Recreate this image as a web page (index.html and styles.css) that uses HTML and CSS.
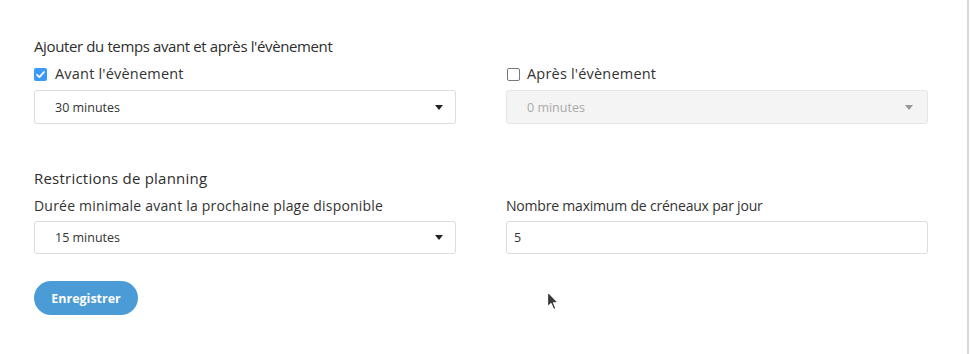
FILE: index.html
```html
<!DOCTYPE html>
<html lang="fr">
<head>
<meta charset="utf-8">
<title>Paramètres</title>
<link rel="stylesheet" href="styles.css">
</head>
<body>
<div class="frame">
  <main class="page">
    <section class="section">
      <h2 class="section-title title-1">Ajouter du temps avant et après l'évènement</h2>
      <div class="cols">
        <div class="col">
          <label class="check">
            <span class="box box-on">
              <svg viewBox="0 0 13 13" width="13" height="13"><path d="M3 6.8 L5.4 9.1 L10 4" fill="none" stroke="#fff" stroke-width="1.8" stroke-linecap="round" stroke-linejoin="round"/></svg>
            </span>
            <span class="check-text">Avant l'évènement</span>
          </label>
          <div class="select">
            <span class="select-value">30 minutes</span>
            <span class="caret"></span>
          </div>
        </div>
        <div class="col">
          <label class="check">
            <span class="box box-off"></span>
            <span class="check-text">Après l'évènement</span>
          </label>
          <div class="select select-disabled">
            <span class="select-value">0 minutes</span>
            <span class="caret"></span>
          </div>
        </div>
      </div>
    </section>

    <section class="section section-2">
      <h2 class="section-title title-2">Restrictions de planning</h2>
      <div class="cols">
        <div class="col">
          <div class="field-label label-wide">Durée minimale avant la prochaine plage disponible</div>
          <div class="select select-2">
            <span class="select-value">15 minutes</span>
            <span class="caret"></span>
          </div>
        </div>
        <div class="col">
          <div class="field-label">Nombre maximum de créneaux par jour</div>
          <div class="input">5</div>
        </div>
      </div>
    </section>

    <div class="actions">
      <button class="btn" type="button">Enregistrer</button>
      <svg class="pointer" width="14" height="22" viewBox="0 0 14 22">
        <path d="M1.5 1.5 L1.5 17 L5 13.6 L7.6 19.6 L10 18.6 L7.5 12.8 L12.3 12.8 Z" fill="#3a3a3a" stroke="#fff" stroke-width="1.2" stroke-linejoin="round"/>
      </svg>
    </div>
  </main>
  <div class="edge"></div>
</div>
</body>
</html>
```
FILE: styles.css
```css
html, body {
  margin: 0;
  padding: 0;
  background: #fff;
}
body {
  font-family: "Open Sans", "Noto Sans", "DejaVu Sans", sans-serif;
  color: #333;
}
.frame {
  display: flex;
  width: 970px;
  height: 354px;
  overflow: hidden;
}
.page {
  width: 894px;
  padding: 36px 0 0 34px;
  flex: none;
}
.edge {
  margin-left: auto;
  width: 2px;
  margin-right: 1px;
  background: #d8d8d8;
}
.section-title {
  margin: 0;
  font-size: 15px;
  font-weight: 400;
  line-height: 20px;
  color: #2e2e2e;
}
.title-1 {
  letter-spacing: -0.38px;
}
.title-2 {
  letter-spacing: 0.22px;
}
.section-2 {
  margin-top: 44px;
}
.cols {
  display: grid;
  grid-template-columns: 422px 422px;
  column-gap: 50px;
}
.col {
  display: flex;
  flex-direction: column;
}
.section .cols {
  margin-top: 8px;
}
.check {
  display: flex;
  align-items: center;
  height: 20px;
  gap: 8px;
  font-size: 14.5px;
}
.col:nth-child(2) .check {
  padding-left: 1px;
  gap: 7px;
}
.box {
  width: 13px;
  height: 13px;
  box-sizing: border-box;
  border-radius: 2px;
  display: flex;
  flex: none;
}
.box-on {
  background: #3b99fc;
}
.box-off {
  border: 1.5px solid #777;
}
.check-text {
  line-height: 20px;
  letter-spacing: 0.2px;
}
.select, .input {
  box-sizing: border-box;
  height: 34px;
  border: 1px solid #dcdcdc;
  border-radius: 3px;
  background: #fff;
  display: flex;
  align-items: center;
  font-size: 12.5px;
  color: #333;
}
.select {
  margin-top: 6px;
  padding: 0 10px 0 20px;
  justify-content: space-between;
}
.select-2 {
  margin-top: 5px;
  height: 33px;
}
.select-disabled {
  background: #f4f4f4;
  border-color: #e6e6e6;
  color: #aaa;
}
.caret {
  width: 0;
  height: 0;
  border-left: 4px solid transparent;
  border-right: 4px solid transparent;
  border-top: 5px solid #222;
  margin-right: 2px;
}
.select-disabled .caret {
  border-top-color: #999;
  margin-right: 4px;
}
.field-label {
  font-size: 14px;
  line-height: 20px;
  letter-spacing: -0.2px;
}
.label-wide {
  letter-spacing: 0.2px;
}
.input {
  margin-top: 5px;
  height: 33px;
  padding: 0 7px;
}
.actions {
  margin-top: 27px;
  display: flex;
  position: relative;
}
.btn {
  height: 34px;
  width: 104px;
  border: none;
  border-radius: 17px;
  background: #4a9bd6;
  color: #fff;
  font-family: "Open Sans", "Noto Sans", sans-serif;
  font-size: 12.5px;
  font-weight: 700;
  padding: 0;
  cursor: pointer;
}
.pointer {
  position: absolute;
  left: 512px;
  top: 9px;
}
```
